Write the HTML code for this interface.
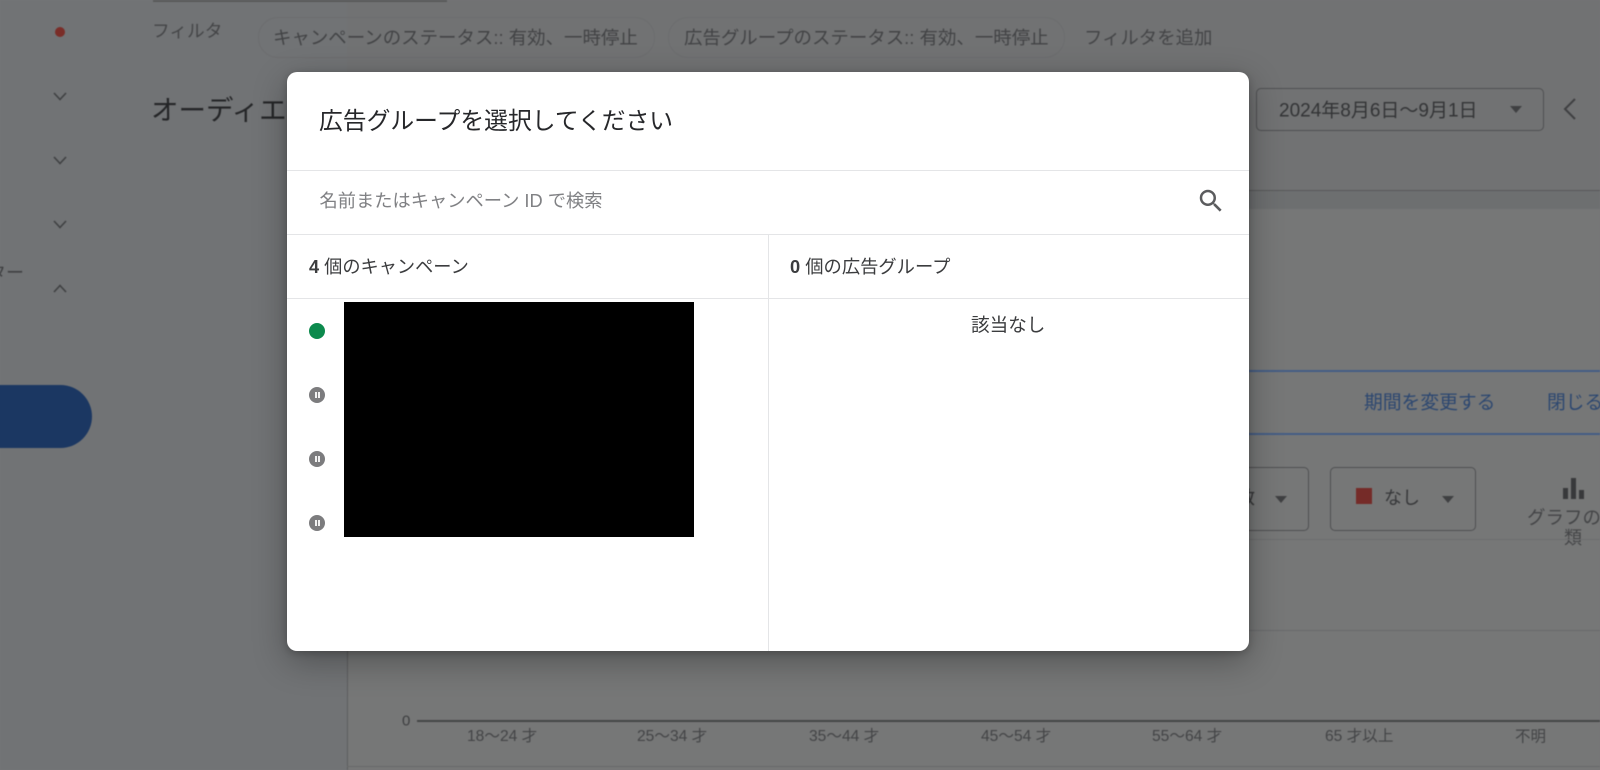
<!DOCTYPE html>
<html lang="ja">
<head>
<meta charset="utf-8">
<title>広告グループを選択してください</title>
<style>
html,body{margin:0;padding:0;width:1600px;height:770px;overflow:hidden}
body{position:relative;background:#767778;font-family:"Liberation Sans","Noto Sans CJK JP",sans-serif;color:#3f4042}
.a{position:absolute}
.t{position:absolute;white-space:nowrap;line-height:1;transform:translateY(-50%)}
.bg{position:absolute;left:0;top:0;width:1600px;height:770px;filter:blur(.4px)}
.chev{position:absolute;width:14px;height:9px}
.caret{position:absolute;width:0;height:0;border-left:6px solid transparent;border-right:6px solid transparent;border-top:7px solid #3f4042}
.box{position:absolute;border:1.5px solid #4f5052;border-radius:5px;box-sizing:border-box}
.chip{position:absolute;border:1px solid #6c6d6f;border-radius:20px;box-sizing:border-box;top:17px;height:41px}
.modal{position:absolute;left:287px;top:72px;width:962px;height:579px;background:#fff;border-radius:10px;box-shadow:0 10px 34px rgba(0,0,0,.3),0 2px 8px rgba(0,0,0,.2);overflow:hidden;color:#2a2b2d}
.hl{position:absolute;left:0;width:962px;height:1.5px;background:#e4e5e7}
.pause{position:absolute;left:22px;width:16px;height:16px;border-radius:50%;background:#7c7c7e}
.pause:before,.pause:after{content:"";position:absolute;top:5px;width:2px;height:6px;background:#f2f2f2}
.pause:before{left:5.5px}.pause:after{left:8.5px}
</style>
</head>
<body>
<div class="bg">
  <div class="a" style="left:0;top:0;width:1600px;height:190px;background:#717273"></div>
  <div class="a" style="left:0;top:190px;width:1600px;height:19px;background:#6d6f70"></div>
  <div class="a" style="left:0;top:209px;width:1600px;height:561px;background:#767777"></div>
  <div class="a" style="left:0;top:0;width:347px;height:770px;background:#717375"></div>

  <div class="a" style="left:153px;top:0;width:294px;height:2px;background:#585959"></div>

  <div class="a" style="left:55px;top:27px;width:10px;height:10px;border-radius:50%;background:#7a2d28"></div>
  <svg class="chev" style="left:53px;top:92px" viewBox="0 0 14 9"><path d="M1 1l6 6.5L13 1" fill="none" stroke="#3f4042" stroke-width="1.6"/></svg>
  <svg class="chev" style="left:53px;top:156px" viewBox="0 0 14 9"><path d="M1 1l6 6.5L13 1" fill="none" stroke="#3f4042" stroke-width="1.6"/></svg>
  <svg class="chev" style="left:53px;top:220px" viewBox="0 0 14 9"><path d="M1 1l6 6.5L13 1" fill="none" stroke="#3f4042" stroke-width="1.6"/></svg>
  <svg class="chev" style="left:53px;top:284px" viewBox="0 0 14 9"><path d="M1 8L7 1.5 13 8" fill="none" stroke="#3f4042" stroke-width="1.6"/></svg>
  <div class="t" style="left:-12px;top:273px;font-size:18px">ター</div>
  <div class="a" style="left:-40px;top:385px;width:132px;height:63px;border-radius:32px;background:#1b3762"></div>

  <div class="t" style="left:152px;top:32px;font-size:17.7px;color:#444547">フィルタ</div>
  <div class="chip" style="left:258px;width:397px"></div>
  <div class="t" style="left:273px;top:38px;font-size:18.45px;color:#424345">キャンペーンのステータス:: 有効、一時停止</div>
  <div class="chip" style="left:668px;width:397px"></div>
  <div class="t" style="left:684px;top:38px;font-size:18.45px;color:#424345">広告グループのステータス:: 有効、一時停止</div>
  <div class="t" style="left:1084px;top:38px;font-size:18.4px;color:#444547">フィルタを追加</div>

  <div class="t" style="left:151px;top:110px;font-size:27.5px;color:#242527">オーディエンス</div>

  <div class="box" style="left:1256px;top:88px;width:288px;height:43px"></div>
  <div class="t" style="left:1279px;top:111px;font-size:19px;color:#333436">2024年8月6日～9月1日</div>
  <div class="caret" style="left:1510px;top:106px"></div>
  <svg class="a" style="left:1562px;top:97px" width="16" height="24" viewBox="0 0 16 24"><path d="M13 2L3 12l10 10" fill="none" stroke="#3f4042" stroke-width="2"/></svg>

  <div class="a" style="left:1249px;top:189.5px;width:351px;height:1.5px;background:#58595a"></div>
  <div class="a" style="left:1249px;top:370px;width:351px;height:1.5px;background:#445d85"></div>
  <div class="a" style="left:1249px;top:433px;width:351px;height:1.5px;background:#445d85"></div>
  <div class="t" style="left:1364px;top:403px;font-size:18.8px;color:#2c4770">期間を変更する</div>
  <div class="t" style="left:1547px;top:403px;font-size:18.8px;color:#2c4770">閉じる</div>

  <div class="box" style="left:1150px;top:467px;width:158.5px;height:64px"></div>
  <div class="t" style="left:1237px;top:498px;font-size:18px;color:#363739">数</div>
  <div class="caret" style="left:1275px;top:496px"></div>
  <div class="box" style="left:1330px;top:467px;width:146px;height:64px"></div>
  <div class="a" style="left:1356px;top:488px;width:16px;height:16px;background:#752b28"></div>
  <div class="t" style="left:1384px;top:498px;font-size:18px;color:#363739">なし</div>
  <div class="caret" style="left:1442px;top:496px"></div>
  <div class="a" style="left:1563px;top:488px;width:5px;height:11px;background:#38393b"></div>
  <div class="a" style="left:1571px;top:478px;width:5px;height:21px;background:#38393b"></div>
  <div class="a" style="left:1579px;top:490px;width:5px;height:9px;background:#38393b"></div>
  <div class="t" style="left:1527px;top:518px;font-size:18.5px;color:#444547">グラフの</div>
  <div class="t" style="left:1564px;top:538px;font-size:18px;color:#444547">類</div>
  <div class="a" style="left:1249px;top:539px;width:351px;height:1px;background:#6c6d6f"></div>
  <div class="a" style="left:1249px;top:630px;width:351px;height:1px;background:#68696b"></div>

  <div class="a" style="left:346.5px;top:651px;width:1px;height:119px;background:#5d5e60"></div>
  <div class="a" style="left:347px;top:766px;width:1253px;height:1px;background:#676869"></div>
  <div class="t" style="left:402px;top:721px;font-size:15px;color:#3d3e40">0</div>
  <div class="a" style="left:417px;top:720px;width:1183px;height:1.5px;background:#444546"></div>
  <div class="t" style="left:467px;top:737px;font-size:15.6px;color:#434446">18～24 才</div>
  <div class="t" style="left:637px;top:737px;font-size:15.6px;color:#434446">25～34 才</div>
  <div class="t" style="left:809px;top:737px;font-size:15.6px;color:#434446">35～44 才</div>
  <div class="t" style="left:981px;top:737px;font-size:15.6px;color:#434446">45～54 才</div>
  <div class="t" style="left:1152px;top:737px;font-size:15.6px;color:#434446">55～64 才</div>
  <div class="t" style="left:1325px;top:737px;font-size:15.6px;color:#434446">65 才以上</div>
  <div class="t" style="left:1515px;top:737px;font-size:15.5px;color:#434446">不明</div>
</div>

<div class="modal">
  <div class="t" style="left:32px;top:50px;font-size:23.8px;color:#26272a">広告グループを選択してください</div>
  <div class="hl" style="top:97.5px"></div>
  <div class="t" style="left:32.5px;top:129px;font-size:18.25px;color:#808184">名前またはキャンペーン ID で検索</div>
  <svg class="a" style="left:909px;top:114px" width="30" height="30" viewBox="0 0 24 24"><path fill="#5b5c5e" d="M15.5 14h-.79l-.28-.27A6.471 6.471 0 0 0 16 9.5 6.5 6.5 0 1 0 9.5 16c1.61 0 3.09-.59 4.23-1.57l.27.28v.79l5 4.99L20.49 19l-4.99-5zm-6 0C7.01 14 5 11.99 5 9.5S7.01 5 9.5 5 14 7.01 14 9.5 11.99 14 9.5 14z"/></svg>
  <div class="hl" style="top:161.5px"></div>
  <div class="a" style="left:480.5px;top:162px;width:1px;height:417px;background:#e4e5e7"></div>
  <div class="t" style="left:22px;top:195px;font-size:18.2px;color:#3b3c3e"><b style="font-weight:700">4</b> 個のキャンペーン</div>
  <div class="t" style="left:503px;top:195px;font-size:18.3px;color:#3b3c3e"><b style="font-weight:700">0</b> 個の広告グループ</div>
  <div class="hl" style="top:225.5px"></div>

  <div class="a" style="left:22px;top:251px;width:16px;height:16px;border-radius:50%;background:#0c8a4d"></div>
  <div class="pause" style="top:315px"></div>
  <div class="pause" style="top:379px"></div>
  <div class="pause" style="top:443px"></div>
  <div class="a" style="left:57px;top:230px;width:350px;height:235px;background:#000"></div>

  <div class="t" style="left:684px;top:254px;font-size:18.6px;color:#3b3c3e">該当なし</div>
</div>
</body>
</html>
